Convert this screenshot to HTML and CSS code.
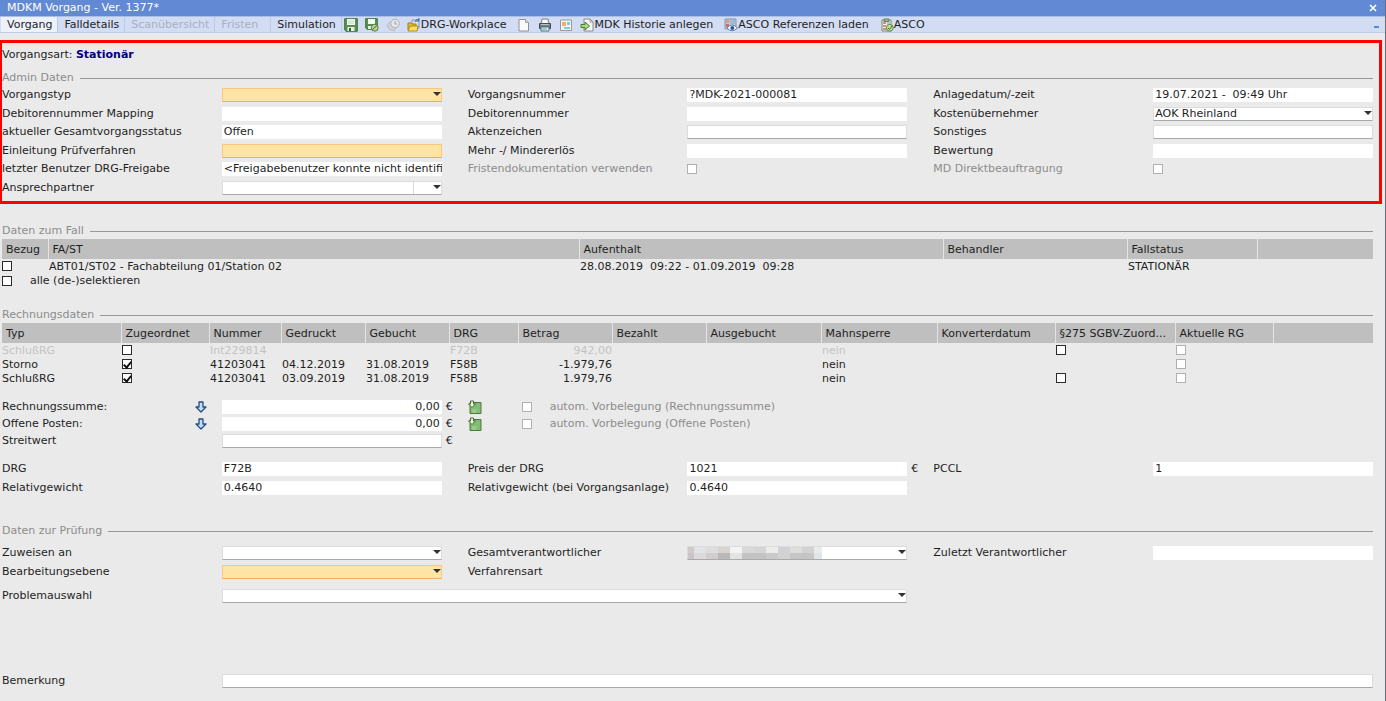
FILE: index.html
```html
<!DOCTYPE html>
<html lang="de">
<head>
<meta charset="utf-8">
<title>MDKM Vorgang</title>
<link rel="stylesheet" href="styles.css">
</head>
<body>
<div class="window">
<header class="titlebar">
  <span>MDKM Vorgang - Ver. 1377*</span>
  <button class="close" type="button" aria-label="Schließen"><svg width="8" height="8" viewBox="0 0 8 8"><path d="M1 1L7 7M7 1L1 7" stroke="#fff" stroke-width="1.6"/></svg></button>
</header>
<nav class="toolbar">
  <button class="tab active" type="button">Vorgang</button>
  <button class="tab" type="button">Falldetails</button>
  <button class="tab" type="button" disabled>Scanübersicht</button>
  <button class="tab wide" type="button" disabled>Fristen</button>
  <button class="tab" type="button">Simulation</button>
  <div class="tools">
    <button class="tool" type="button" aria-label="Speichern"><svg width="14" height="14" viewBox="0 0 14 14"><path d="M.7.7h12.6v12.6H2L.7 12z" fill="#55914f" stroke="#3b7339"/><path d="M3 1h8v6H3z" fill="#f4f8f2"/><path d="M4 3h6M4 5h6" stroke="#c5d6bf"/><path d="M3.500 9h7v4h-7z" fill="#e8eee6"/><path d="M5 10h2v3H5z" fill="#35603a"/></svg></button>
    <button class="tool" type="button" aria-label="Speichern und schließen"><svg width="14" height="14" viewBox="0 0 14 14"><path d="M.7.7h11.600v10.600H2L.7 10z" fill="#55914f" stroke="#3b7339"/><path d="M3 1h7v5H3z" fill="#f4f8f2"/><path d="M3 8h5v3H3z" fill="#e8eee6"/><circle cx="9.700" cy="9.700" r="3.500" fill="#b9cf9c" stroke="#587c3d"/><path d="M7.500 11.500l4.300-3.800" fill="none" stroke="#496b32"/></svg></button>
    <button class="tool" type="button" aria-label="Termin" disabled><svg width="14" height="14" viewBox="0 0 14 14"><path d="M1 7l3-3 6 6-2 3-5-2z" fill="#d3d3d5" stroke="#bcbdc4"/><circle cx="9" cy="5.500" r="4.300" fill="#e6e7eb" stroke="#aaaeb8"/><path d="M9 3v3h2" fill="none" stroke="#999da8"/></svg></button>
    <button class="tool texted" type="button"><svg width="14" height="14" viewBox="0 0 14 14"><path d="M5 2h7v8H5z" fill="#d5e1ee" stroke="#8198b5"/><path d="M8 4c1-3 3-3 4-2m0-2v3H9" fill="none" stroke="#376ca5"/><path d="M1 5h3l1 1h4v6H1z" fill="#e3b72f" stroke="#a78216"/><path d="M3 8h8l-1 5H1z" fill="#ffdf61" stroke="#b18c20"/></svg>DRG-Workplace</button>
    <button class="tool doc" type="button" aria-label="Neues Dokument"><svg width="14" height="14" viewBox="0 0 14 14"><path d="M2 1.500h6.500l3 3v8.500H2z" fill="#fafafa" stroke="#929292"/><path d="M8.500 1.500v3h3" fill="#ddd" stroke="#a5a5a5"/></svg></button>
    <button class="tool" type="button" aria-label="Drucken"><svg width="14" height="14" viewBox="0 0 14 14"><path d="M4 1h6l1 5H3z" fill="#f7f7f7" stroke="#7d7d7d"/><path d="M1.500 5.500h11v5h-11z" fill="#727f82" stroke="#444e52"/><path d="M3 6.500h8" stroke="#b7c5c7"/><path d="M3 9h8v4H3z" fill="#eef8fb" stroke="#536a75"/><path d="M4 11h5" stroke="#47a2c4"/></svg></button>
    <button class="tool" type="button" aria-label="Vorschau"><svg width="14" height="14" viewBox="0 0 14 14"><path d="M1.500 2h11v10.500h-11z" fill="#f4f5f5" stroke="#91999e"/><path d="M3 4h4v4H3z" fill="#f3ad6a"/><path d="M8 4h3v3H8zM5 9h6v2H5z" fill="#8dc3db"/></svg></button>
    <button class="tool texted" type="button"><svg width="14" height="14" viewBox="0 0 14 14"><path d="M4 1h6l3 3v9H4z" fill="#f7f7f7" stroke="#8b8b8b"/><path d="M10 1v3h3" fill="none" stroke="#999"/><path d="M1 6.500h4V4l4.500 4L5 12V9.500H1z" fill="#acd886" stroke="#487c2f"/></svg>MDK Historie anlegen</button>
    <button class="tool texted far" type="button"><svg width="14" height="14" viewBox="0 0 14 14"><path d="M1 1h11v10H1z" fill="#b4cce4" stroke="#8095aa"/><path d="M2 2h3v3H2z" fill="#e39a6a"/><path d="M2 6h3v3H2z" fill="#c3706b"/><path d="M6 2h5v4H6z" fill="#9dbbd9"/><path d="M3 10q5-6 10.500 0Q8 15.500 3 10z" fill="#fff" stroke="#647fa1"/><circle cx="8.300" cy="10" r="2" fill="#2859a3"/></svg>ASCO Referenzen laden</button>
    <button class="tool texted far" type="button"><svg width="14" height="14" viewBox="0 0 14 14"><path d="M2 2h9v11H2z" fill="#edf3ea" stroke="#718c6c"/><path d="M4 1h5v2.500H4z" fill="#a4b79b" stroke="#667d5e"/><path d="M3 5h3M3 8h3M3 11h3" stroke="#d06d60" stroke-width="1.500"/><path d="M7 5h3M7 7h2" stroke="#689cba"/><circle cx="9.800" cy="9.800" r="3.400" fill="#c4dca5" stroke="#5e8541"/><path d="M8 10l1.500 1.500L12 8" fill="none" stroke="#426b2f"/></svg>ASCO</button>
  </div>
  <button class="minimize" type="button" aria-label="Minimieren"></button>
</nav>

<main>
<section class="admin">
  <p class="kind">Vorgangsart: <strong>Stationär</strong></p>
  <h2 class="legend">Admin Daten</h2>
  <div class="rows">
    <div class="row">
      <label for="typ">Vorgangstyp</label><span class="select required"><select id="typ"><option></option></select></span>
      <label class="c2" for="nr">Vorgangsnummer</label><input id="nr" value="?MDK-2021-000081" readonly>
      <label class="c3" for="anlage">Anlagedatum/-zeit</label><input id="anlage" value="19.07.2021 -  09:49 Uhr" readonly>
    </div>
    <div class="row">
      <label for="map">Debitorennummer Mapping</label><input id="map" readonly>
      <label class="c2" for="deb">Debitorennummer</label><input id="deb" readonly>
      <label class="c3" for="kost">Kostenübernehmer</label><span class="select"><select id="kost"><option>AOK Rheinland</option></select></span>
    </div>
    <div class="row">
      <label for="status">aktueller Gesamtvorgangsstatus</label><input id="status" value="Offen" readonly>
      <label class="c2" for="akz">Aktenzeichen</label><input id="akz" class="edit">
      <label class="c3" for="sonst">Sonstiges</label><input id="sonst" class="edit">
    </div>
    <div class="row">
      <label for="einl">Einleitung Prüfverfahren</label><input id="einl" class="edit required">
      <label class="c2" for="mehr">Mehr -/ Mindererlös</label><input id="mehr" readonly>
      <label class="c3" for="bew">Bewertung</label><input id="bew" readonly>
    </div>
    <div class="row">
      <label for="frei">letzter Benutzer DRG-Freigabe</label><input id="frei" value="&lt;Freigabebenutzer konnte nicht identifi" readonly>
      <label class="c2 off" for="frist">Fristendokumentation verwenden</label><input id="frist" class="check" type="checkbox" disabled>
      <label class="c3 off" for="md">MD Direktbeauftragung</label><input id="md" class="check" type="checkbox" disabled>
    </div>
    <div class="row">
      <label for="anspr">Ansprechpartner</label><span class="select split"><select id="anspr"><option></option></select></span>
    </div>
  </div>
</section>

<div class="body">
<section class="fall">
  <h2 class="legend">Daten zum Fall</h2>
  <table>
    <colgroup><col class="w46"><col class="w531"><col class="w364"><col class="w184"><col class="w130"><col></colgroup>
    <thead><tr><th>Bezug</th><th>FA/ST</th><th>Aufenthalt</th><th>Behandler</th><th>Fallstatus</th><th></th></tr></thead>
    <tbody><tr><td><input class="check" type="checkbox" aria-label="Bezug"></td><td>ABT01/ST02 - Fachabteilung 01/Station 02</td><td class="pre">28.08.2019  09:22 - 01.09.2019  09:28</td><td></td><td>STATIONÄR</td><td></td></tr></tbody>
  </table>
  <div class="all"><input class="check" type="checkbox" id="alle"><label for="alle">alle (de-)selektieren</label></div>
</section>

<section class="rechnung">
  <h2 class="legend">Rechnungsdaten</h2>
  <table>
    <colgroup><col class="w119"><col class="w88"><col class="w72"><col class="w84"><col class="w84"><col class="w69"><col class="w94"><col class="w94"><col class="w115"><col class="w116"><col class="w118"><col class="w120"><col class="w98"><col></colgroup>
    <thead><tr><th>Typ</th><th>Zugeordnet</th><th>Nummer</th><th>Gedruckt</th><th>Gebucht</th><th>DRG</th><th>Betrag</th><th>Bezahlt</th><th>Ausgebucht</th><th>Mahnsperre</th><th>Konverterdatum</th><th>§275 SGBV-Zuord...</th><th>Aktuelle RG</th><th></th></tr></thead>
    <tbody>
      <tr class="faded"><td>SchlußRG</td><td><input class="check" type="checkbox" aria-label="Zugeordnet"></td><td>Int229814</td><td></td><td></td><td>F72B</td><td class="num">942,00</td><td></td><td></td><td>nein</td><td></td><td><input class="check" type="checkbox" aria-label="§275 SGBV-Zuordnung"></td><td><input class="check" type="checkbox" aria-label="Aktuelle RG" disabled></td><td></td></tr>
      <tr><td>Storno</td><td><input class="check" type="checkbox" aria-label="Zugeordnet" checked></td><td>41203041</td><td>04.12.2019</td><td>31.08.2019</td><td>F58B</td><td class="num">-1.979,76</td><td></td><td></td><td>nein</td><td></td><td></td><td><input class="check" type="checkbox" aria-label="Aktuelle RG" disabled></td><td></td></tr>
      <tr><td>SchlußRG</td><td><input class="check" type="checkbox" aria-label="Zugeordnet" checked></td><td>41203041</td><td>03.09.2019</td><td>31.08.2019</td><td>F58B</td><td class="num">1.979,76</td><td></td><td></td><td>nein</td><td></td><td><input class="check" type="checkbox" aria-label="§275 SGBV-Zuordnung"></td><td><input class="check" type="checkbox" aria-label="Aktuelle RG" disabled></td><td></td></tr>
    </tbody>
  </table>
  <div class="sums">
    <div class="row">
      <div class="witharrow"><label for="summe">Rechnungssumme:</label><button type="button" class="arrow" aria-label="Rechnungssumme übernehmen"><svg width="12" height="12" viewBox="0 0 12 12"><path d="M4 1h4v5h3L6 11 1 6h3z" fill="#bfdff2" stroke="#234e86" stroke-width="1.300" stroke-linejoin="round"/></svg></button></div>
      <input id="summe" class="amount" value="0,00" readonly><span class="unit">€</span>
      <div class="auto"><button type="button" class="arrow" aria-label="Vorbelegen"><svg width="14" height="14" viewBox="0 0 14 14"><path d="M2 2.500h11v11H2z" fill="#80bd76" stroke="#55743a"/><path d="M4 10h5M4 12h4" stroke="#a9d99f"/><path d="M2.500 1h3v3h2L4 7.500.5 4h2z" fill="#f1f8d9" stroke="#426a2d"/></svg></button><input class="check" type="checkbox" id="auto1" disabled><label class="off" for="auto1">autom. Vorbelegung (Rechnungssumme)</label></div>
    </div>
    <div class="row">
      <div class="witharrow"><label for="offen">Offene Posten:</label><button type="button" class="arrow" aria-label="Offene Posten übernehmen"><svg width="12" height="12" viewBox="0 0 12 12"><path d="M4 1h4v5h3L6 11 1 6h3z" fill="#bfdff2" stroke="#234e86" stroke-width="1.300" stroke-linejoin="round"/></svg></button></div>
      <input id="offen" class="amount" value="0,00" readonly><span class="unit">€</span>
      <div class="auto"><button type="button" class="arrow" aria-label="Vorbelegen"><svg width="14" height="14" viewBox="0 0 14 14"><path d="M2 2.500h11v11H2z" fill="#80bd76" stroke="#55743a"/><path d="M4 10h5M4 12h4" stroke="#a9d99f"/><path d="M2.500 1h3v3h2L4 7.500.5 4h2z" fill="#f1f8d9" stroke="#426a2d"/></svg></button><input class="check" type="checkbox" id="auto2" disabled><label class="off" for="auto2">autom. Vorbelegung (Offene Posten)</label></div>
    </div>
    <div class="row">
      <label for="streit">Streitwert</label><input id="streit" class="edit"><span class="unit">€</span>
    </div>
  </div>
  <div class="rows drg">
    <div class="row">
      <label for="drg">DRG</label><input id="drg" value="F72B" readonly>
      <label class="c2" for="preis">Preis der DRG</label><input id="preis" value="1021" readonly><span class="unit">€</span>
      <label class="c3" for="pccl">PCCL</label><input id="pccl" value="1" readonly>
    </div>
    <div class="row">
      <label for="rel">Relativgewicht</label><input id="rel" value="0.4640" readonly>
      <label class="c2" for="rel2">Relativgewicht (bei Vorgangsanlage)</label><input id="rel2" value="0.4640" readonly>
    </div>
  </div>
</section>

<section class="pruefung">
  <h2 class="legend">Daten zur Prüfung</h2>
  <div class="rows">
    <div class="row">
      <label for="zuw">Zuweisen an</label><span class="select"><select id="zuw"><option></option></select></span>
      <label class="c2" for="ges">Gesamtverantwortlicher</label>
      <span class="select"><select id="ges"><option></option></select>
        <svg class="mosaic" width="134" height="12" viewBox="0 0 134 12" shape-rendering="crispEdges"><path fill="#d0cacb" d="M0 0h6v6H0z"/><path fill="#e2e3e6" d="M6 0h12v6H6z"/><path fill="#ddd" d="M18 0h12v6H18z"/><path fill="#d8d3cf" d="M30 0h12v6H30z"/><path fill="#f3f3f3" d="M42 0h12v6H42z"/><path fill="#d8d8d8" d="M54 0h12v6H54z"/><path fill="#d3d5d7" d="M66 0h12v6H66z"/><path fill="#eeecea" d="M78 0h12v6H78z"/><path fill="#cfd1d4" d="M90 0h12v6H90z"/><path fill="#dedddb" d="M102 0h12v6h-12z"/><path fill="#d2d2d2" d="M114 0h12v6h-12z"/><path fill="#e9eaec" d="M126 0h8v6h-8z"/><path fill="#c9c5c6" d="M0 6h6v6H0z"/><path fill="#dadadc" d="M6 6h12v6H6z"/><path fill="#d0cdce" d="M18 6h12v6H18z"/><path fill="#bbb6b7" d="M30 6h12v6H30z"/><path fill="#e3e3e6" d="M42 6h12v6H42z"/><path fill="#c4c3c3" d="M54 6h24v6H54z"/><path fill="#cacaca" d="M78 6h12v6H78z"/><path fill="#d3d2d2" d="M90 6h12v6H90z"/><path fill="#c6c5c5" d="M102 6h24v6h-24z"/><path fill="#dfe4e8" d="M126 6h8v6h-8z"/></svg>
      </span>
      <label class="c3" for="zul">Zuletzt Verantwortlicher</label><input id="zul" readonly>
    </div>
    <div class="row">
      <label for="ebene">Bearbeitungsebene</label><span class="select required"><select id="ebene"><option></option></select></span>
      <span class="c2">Verfahrensart</span>
    </div>
  </div>
  <div class="row problem"><label for="prob">Problemauswahl</label><span class="select span4"><select id="prob"><option></option></select></span></div>
  <div class="row remark"><label for="bem">Bemerkung</label><input id="bem" class="edit span7"></div>
</section>
</div>
</main>
</div>
</body>
</html>
```
FILE: styles.css
```css
* { box-sizing: border-box; }
html, body { margin: 0; min-height: 100%; }
body {
  background: #eaeaea;
  color: #1e1e1e;
  font: 11px/14px "DejaVu Sans", Verdana, sans-serif;
}
button, input, select { font: inherit; color: inherit; margin: 0; padding: 0; border: 0; background: none; border-radius: 0; }
svg { display: block; flex: none; }
.window { min-height: 100vh; border-right: 1px solid #6a6e78; }

.titlebar {
  display: flex; align-items: center; justify-content: space-between;
  height: 16px; padding: 0 8px 0 7px;
  background: #6289d3; color: #fff;
}
.toolbar {
  display: flex; align-items: stretch;
  height: 17px; padding-left: 1px;
  background: #d2dcf3; border-top: 1px solid #a9bfe8; border-bottom: 1px solid #bccbe8;
}
.tab { padding: 0 5px 0 6px; border-right: 1px solid #b8c9e9; white-space: nowrap; }
.tab.active { background: #edf1fa; }
.tab.wide { padding-right: 12px; }
.tab:disabled { color: #a8b0c0; }
.tools { display: flex; flex: 1; gap: 7px; padding-left: 2px; }
.tool { display: flex; align-items: center; white-space: nowrap; }
.tool.doc { margin-left: 4px; }
.tool.far { margin-left: 4px; }
.minimize { align-self: flex-end; width: 5px; height: 2px; margin: 0 6px 4px 0; background: #5f87cf; }

.admin { margin: 7px 3px 0 0; padding: 5px 6px 4px 0; border: 3px solid #f00; border-left-width: 2px; }
.kind { margin: 0; }
.kind strong { color: #000080; }
.legend {
  display: flex; align-items: center; gap: 6px;
  margin: 0; color: #8c8c8c; font: inherit;
}
.legend::after { content: ""; flex: 1; height: 1px; background: #989898; }
.admin .legend { margin: 9px 0 1px; }
.body { padding: 0 12px 0 2px; }

.row {
  display: grid; align-items: center;
  grid-template-columns: 1fr 1fr 26px 1fr 1fr 26px 1fr 1fr;
  height: 18px;
}
.rows .row:nth-child(even) { height: 19px; }
.row label, .row .c2 { white-space: nowrap; }
.c2 { grid-column: 4; }
.c3 { grid-column: 7; }
.off { color: #8c8c8c; }
.row input:not(.check) { width: 100%; height: 14px; padding: 0 0 0 2px; background: #fff; white-space: pre; }
.row input.edit:not(.check) { border: 1px solid #dcdcdc; border-bottom-color: #a9a9a9; }
.row input.required:not(.check) { background: #ffe5a5; border-color: #fcc67c; border-bottom-color: #f3ad65; }
.row input.amount:not(.check) { padding-right: 2px; text-align: right; }
.unit { padding-left: 4px; }
.row input.span7 { grid-column: 2 / 9; }

.select { position: relative; display: block; height: 14px; }
.select select {
  display: block; width: 100%; height: 14px; padding: 0 14px 0 1px;
  appearance: none; background: #fff; line-height: 12px;
  border: 1px solid #dcdcdc; border-bottom-color: #a9a9a9;
}
.select::after {
  content: ""; position: absolute; right: 1px; top: 4px;
  border: 4px solid transparent; border-top-color: #333; border-bottom: 0;
}
.select.required select { background: #ffe5a5; border-color: #fcc67c; border-bottom-color: #f3ad65; }
.select.split::before { content: ""; position: absolute; right: 28px; top: 1px; width: 1px; height: 12px; background: #dcdcdc; }
.select.span4 { grid-column: 2 / 6; }
.mosaic { position: absolute; left: 1px; top: 1px; }

.check {
  display: block; position: relative; appearance: none;
  width: 10px; height: 10px;
}
input.check { background: #fff; border: 1px solid #2b2b2b; }
input.check:disabled { border-color: #b0b0b0; }
.check:checked::after {
  content: ""; position: absolute; left: 2px; top: 0; width: 3px; height: 6px;
  border: solid #111; border-width: 0 2px 2px 0; transform: rotate(40deg);
}

table { width: 100%; table-layout: fixed; border-collapse: collapse; }
th {
  height: 20px; padding: 2px 0 0 4px; text-align: left; font-weight: normal;
  background: #bfbfbf; border-right: 1px solid #e4e4e4; white-space: nowrap;
}
th:last-child { border-right: 0; }
td { height: 14px; padding: 0 1px; line-height: 13px; white-space: nowrap; }
td:first-child { padding-left: 0; }
td.pre { white-space: pre; }
td.num { text-align: right; padding: 0; }
.faded { color: #c3c3c3; }
.w46 { width: 46px; } .w531 { width: 531px; } .w364 { width: 364px; } .w184 { width: 184px; }
.w130 { width: 130px; } .w119 { width: 119px; } .w88 { width: 88px; } .w72 { width: 72px; }
.w84 { width: 84px; } .w69 { width: 69px; } .w94 { width: 94px; } .w115 { width: 115px; }
.w116 { width: 116px; } .w118 { width: 118px; } .w120 { width: 120px; } .w98 { width: 98px; }

.fall { padding-top: 20px; }
.fall .legend, .rechnung .legend { padding-bottom: 1px; }
.fall table { margin-bottom: 1px; }
.all { display: flex; align-items: center; gap: 18px; }
.rechnung { padding-top: 20px; }
.sums { padding-top: 13px; }
.sums .row { height: 17px; }
.witharrow { display: flex; align-items: center; justify-content: space-between; padding-right: 15px; }
.auto { grid-column: 4 / 7; display: flex; align-items: center; }
.auto .check { margin: 0 18px 0 40px; }
.drg { padding-top: 11px; }
.pruefung { padding-top: 27px; }
.pruefung .rows { padding-top: 6px; }
.problem { margin-top: 6px; }
.remark { margin-top: 67px; }
```
